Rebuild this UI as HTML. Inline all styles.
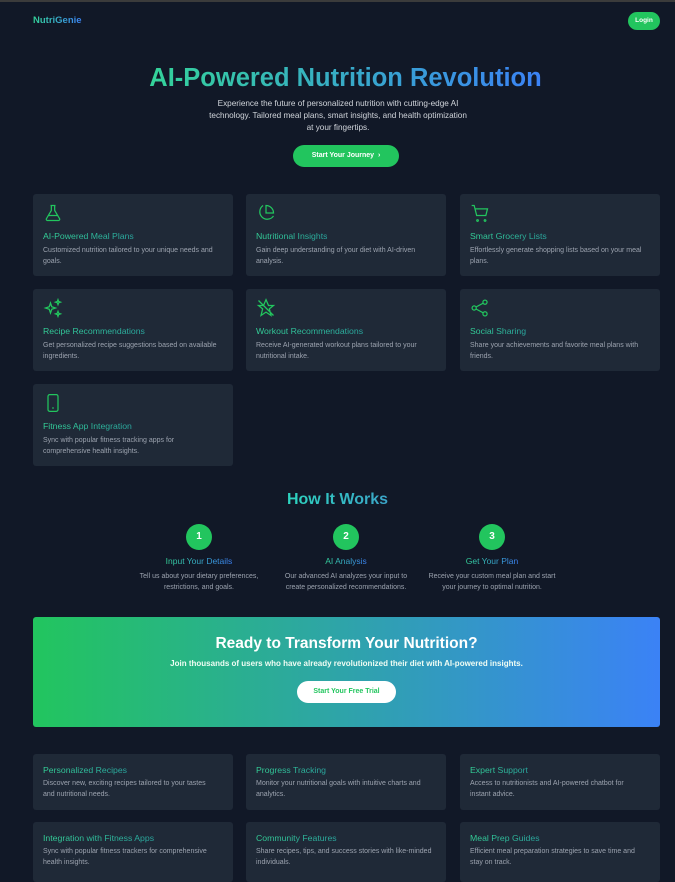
<!DOCTYPE html>
<html><head><meta charset="utf-8"><style>
*{margin:0;padding:0;box-sizing:border-box}
body{width:675px;height:870px;overflow:hidden;background:#111827;font-family:"Liberation Sans",sans-serif;position:relative;border-top:2px solid #3b3b3b}
.a{position:absolute}
.grad{background:linear-gradient(90deg,#34d399,#3b82f6);-webkit-background-clip:text;background-clip:text;color:transparent}
.card{position:absolute;width:200px;background:#1f2937;border-radius:3px}
.card svg{position:absolute;left:10px;top:9px}
.card h3{position:absolute;left:10px;font-size:8.7px;font-weight:normal;color:#34d399;white-space:nowrap;background:linear-gradient(90deg,#34d399,#2aa8a0);-webkit-background-clip:text;background-clip:text;color:transparent}
.card p{position:absolute;left:10px;right:14px;font-size:7px;line-height:10.5px;color:#9ca3af}
.c{text-align:center}
.step{position:absolute;width:130px;text-align:center}
.step .n{width:26px;height:26px;border-radius:50%;background:#22c55e;color:#fff;font-weight:bold;font-size:10px;line-height:26px;margin:0 auto}
.step h4{font-size:8.5px;font-weight:normal;margin-top:6px;background:linear-gradient(90deg,#34d399,#3b82f6);-webkit-background-clip:text;background-clip:text;color:transparent;display:inline-block}
.step p{font-size:7px;line-height:10.5px;color:#9ca3af;margin-top:3px}
</style></head><body>
<div class="a grad" style="left:33px;top:13px;font-size:9.5px;font-weight:bold">NutriGenie</div>
<div class="a" style="left:628px;top:10px;width:32px;height:18px;border-radius:9px;background:#22c55e;color:#fff;font-size:6.5px;font-weight:bold;text-align:center;line-height:18px">Login</div>
<div class="a c" style="left:8px;width:675px;top:62px"><span class="grad" style="font-size:25.5px;font-weight:bold">AI-Powered Nutrition Revolution</span></div>
<div class="a c" style="left:206px;width:264px;top:96px;font-size:8.2px;line-height:12px;color:#d1d5db">Experience the future of personalized nutrition with cutting-edge AI technology. Tailored meal plans, smart insights, and health optimization at your fingertips.</div>
<div class="a" style="left:293px;top:143px;width:106px;height:22px;border-radius:11px;background:#22c55e;color:#fff;font-size:7px;font-weight:bold;text-align:center;line-height:22px">Start Your Journey &nbsp;›</div>

<div class="card" style="left:33px;top:192px;height:82px">
<svg width="20" height="20" viewBox="0 0 24 24" fill="none" stroke="#22c55e" stroke-width="1.5"><path d="M9 3h6M10 3v6L4 19a1.5 1.5 0 0 0 1.3 2h13.4a1.5 1.5 0 0 0 1.3-2L14 9V3M6 15h12"/></svg>
<h3 style="top:37px">AI-Powered Meal Plans</h3><p style="top:52px">Customized nutrition tailored to your unique needs and goals.</p></div>
<div class="card" style="left:246px;top:192px;height:82px">
<svg width="20" height="20" viewBox="0 0 24 24" fill="none" stroke="#22c55e" stroke-width="1.5"><path d="M21 15.5A9 9 0 1 1 8.5 3M21 12A9 9 0 0 0 12 3v9z"/></svg>
<h3 style="top:37px">Nutritional Insights</h3><p style="top:52px">Gain deep understanding of your diet with AI-driven analysis.</p></div>
<div class="card" style="left:460px;top:192px;height:82px">
<svg width="20" height="20" viewBox="0 0 24 24" fill="none" stroke="#22c55e" stroke-width="1.5"><path d="M2 3h3l3 12h11l2-8H6M9 20a1 1 0 1 0 0.1 0M18 20a1 1 0 1 0 0.1 0"/></svg>
<h3 style="top:37px">Smart Grocery Lists</h3><p style="top:52px">Effortlessly generate shopping lists based on your meal plans.</p></div>

<div class="card" style="left:33px;top:287px;height:82px">
<svg width="20" height="20" viewBox="0 0 24 24" fill="none" stroke="#22c55e" stroke-width="1.5"><path d="M9 6l1.5 4.5L15 12l-4.5 1.5L9 18l-1.5-4.5L3 12l4.5-1.5zM18 2l.8 2.2L21 5l-2.2.8L18 8l-.8-2.2L15 5l2.2-.8zM18 16l.8 2.2L21 19l-2.2.8L18 22l-.8-2.2L15 19l2.2-.8z"/></svg>
<h3 style="top:37px">Recipe Recommendations</h3><p style="top:52px">Get personalized recipe suggestions based on available ingredients.</p></div>
<div class="card" style="left:246px;top:287px;height:82px">
<svg width="20" height="20" viewBox="0 0 24 24" fill="none" stroke="#22c55e" stroke-width="1.5"><path d="M12 2l3 7h6l-5 4 2 8-6-4-6 4 2-8-5-4h6zM3 3l18 18"/></svg>
<h3 style="top:37px">Workout Recommendations</h3><p style="top:52px">Receive AI-generated workout plans tailored to your nutritional intake.</p></div>
<div class="card" style="left:460px;top:287px;height:82px">
<svg width="20" height="20" viewBox="0 0 24 24" fill="none" stroke="#22c55e" stroke-width="1.5"><circle cx="18" cy="5" r="2.5"/><circle cx="5" cy="12" r="2.5"/><circle cx="18" cy="19" r="2.5"/><path d="M7.2 10.8l8.6-4.6M7.2 13.2l8.6 4.6"/></svg>
<h3 style="top:37px">Social Sharing</h3><p style="top:52px">Share your achievements and favorite meal plans with friends.</p></div>

<div class="card" style="left:33px;top:382px;height:82px">
<svg width="20" height="20" viewBox="0 0 24 24" fill="none" stroke="#22c55e" stroke-width="1.5"><rect x="6" y="2" width="12" height="20" rx="2"/><path d="M11 18h2"/></svg>
<h3 style="top:37px">Fitness App Integration</h3><p style="top:52px;right:50px">Sync with popular fitness tracking apps for comprehensive health insights.</p></div>

<div class="a c" style="left:0;width:675px;top:489px"><span class="grad" style="font-size:16px;font-weight:bold;background:linear-gradient(90deg,#2dd4bf,#3ba4c8);-webkit-background-clip:text;background-clip:text">How It Works</span></div>
<div class="step" style="left:134px;top:522px"><div class="n">1</div><h4>Input Your Details</h4><p>Tell us about your dietary preferences, restrictions, and goals.</p></div>
<div class="step" style="left:281px;top:522px"><div class="n">2</div><h4>AI Analysis</h4><p>Our advanced AI analyzes your input to create personalized recommendations.</p></div>
<div class="step" style="left:427px;top:522px"><div class="n">3</div><h4>Get Your Plan</h4><p>Receive your custom meal plan and start your journey to optimal nutrition.</p></div>

<div class="a" style="left:33px;top:615px;width:627px;height:110px;border-radius:3px;background:linear-gradient(90deg,#22c55e,#3b82f6)">
<div class="c" style="margin-top:18px;color:#fff;font-size:15.5px;font-weight:bold">Ready to Transform Your Nutrition?</div>
<div class="c" style="margin-top:6px;color:#f0fdf4;font-size:8px;font-weight:bold">Join thousands of users who have already revolutionized their diet with AI-powered insights.</div>
<div style="margin:13px auto 0;width:99px;height:22px;border-radius:11px;background:#fff;color:#22c55e;font-size:7px;font-weight:bold;text-align:center;line-height:22px">Start Your Free Trial</div>
</div>

<div class="card" style="left:33px;top:752px;height:56px"><h3 style="top:11px">Personalized Recipes</h3><p style="top:25px">Discover new, exciting recipes tailored to your tastes and nutritional needs.</p></div>
<div class="card" style="left:246px;top:752px;height:56px"><h3 style="top:11px">Progress Tracking</h3><p style="top:25px">Monitor your nutritional goals with intuitive charts and analytics.</p></div>
<div class="card" style="left:460px;top:752px;height:56px"><h3 style="top:11px">Expert Support</h3><p style="top:25px">Access to nutritionists and AI-powered chatbot for instant advice.</p></div>
<div class="card" style="left:33px;top:820px;height:60px"><h3 style="top:11px">Integration with Fitness Apps</h3><p style="top:25px">Sync with popular fitness trackers for comprehensive health insights.</p></div>
<div class="card" style="left:246px;top:820px;height:60px"><h3 style="top:11px">Community Features</h3><p style="top:25px">Share recipes, tips, and success stories with like-minded individuals.</p></div>
<div class="card" style="left:460px;top:820px;height:60px"><h3 style="top:11px">Meal Prep Guides</h3><p style="top:25px">Efficient meal preparation strategies to save time and stay on track.</p></div>
</body></html>
